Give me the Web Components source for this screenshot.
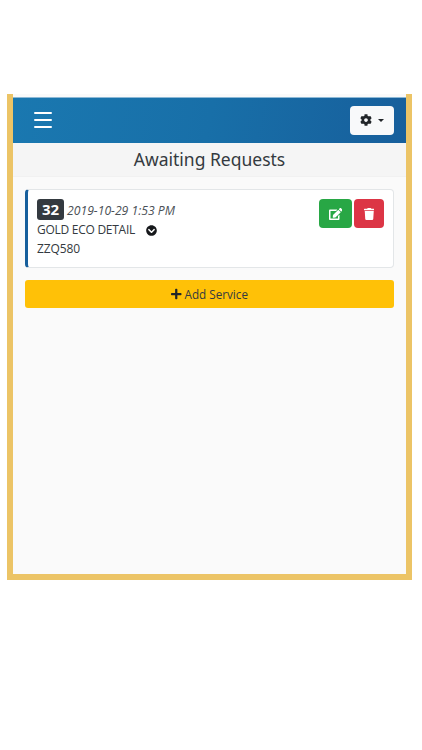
<!DOCTYPE html>
<html>
<head>
<meta charset="utf-8">
<title>Awaiting Requests</title>
<style>
  html, body { margin: 0; background: #fff; }
  body { font-family: "Open Sans", "Liberation Sans", sans-serif; color: #343a40; }
</style>
</head>
<body>
<phone-frame>
  <top-bar></top-bar>
  <page-title>Awaiting Requests</page-title>
  <request-list>
    <request-card number="32" date="2019-10-29 1:53 PM" service="GOLD ECO DETAIL" plate="ZZQ580"></request-card>
    <add-button>Add Service</add-button>
  </request-list>
</phone-frame>

<script>
  const ICONS = {
    cog: ['0 0 512 512', 'M487.4 315.7l-42.6-24.6c4.3-23.2 4.3-47 0-70.2l42.6-24.6c4.9-2.8 7.1-8.6 5.5-14-11.1-35.6-30-67.8-54.7-94.6-3.8-4.1-10-5.1-14.8-2.3L380.8 110c-17.9-15.4-38.5-27.3-60.8-35.1V25.8c0-5.6-3.9-10.5-9.4-11.7-36.7-8.2-74.3-7.8-109.2 0-5.5 1.2-9.4 6.1-9.4 11.7V75c-22.2 7.9-42.8 19.8-60.8 35.1L88.7 85.5c-4.9-2.8-11-1.9-14.8 2.3-24.7 26.7-43.6 58.9-54.7 94.6-1.7 5.4.6 11.2 5.5 14L67.3 221c-4.3 23.2-4.3 47 0 70.2l-42.6 24.6c-4.9 2.8-7.1 8.6-5.5 14 11.1 35.6 30 67.8 54.7 94.6 3.8 4.1 10 5.1 14.8 2.3l42.6-24.6c17.9 15.4 38.5 27.3 60.8 35.1v49.2c0 5.6 3.9 10.5 9.4 11.7 36.7 8.2 74.3 7.8 109.2 0 5.5-1.2 9.4-6.1 9.4-11.7v-49.2c22.2-7.9 42.8-19.8 60.8-35.1l42.6 24.6c4.9 2.8 11 1.9 14.8-2.3 24.7-26.7 43.6-58.9 54.7-94.6 1.5-5.5-.7-11.3-5.6-14.1zM256 336c-44.1 0-80-35.9-80-80s35.9-80 80-80 80 35.9 80 80-35.9 80-80 80z'],
    edit: ['0 0 576 512', 'M402.6 83.2l90.2 90.2c3.8 3.8 3.8 10 0 13.8L274.4 405.6l-92.8 10.3c-12.4 1.4-22.9-9.1-21.5-21.5l10.3-92.8L388.8 83.2c3.8-3.8 10-3.8 13.8 0zm162-22.9l-48.8-48.8c-15.2-15.2-39.9-15.2-55.2 0l-35.4 35.4c-3.8 3.8-3.8 10 0 13.8l90.2 90.2c3.8 3.8 10 3.8 13.8 0l35.4-35.4c15.2-15.3 15.2-40 0-55.2zM384 346.2V448H64V128h229.8c3.2 0 6.2-1.3 8.5-3.5l40-40c7.6-7.6 2.2-20.5-8.5-20.5H48C21.5 64 0 85.5 0 112v352c0 26.5 21.5 48 48 48h352c26.5 0 48-21.5 48-48V306.2c0-10.7-12.9-16-20.5-8.5l-40 40c-2.2 2.3-3.5 5.3-3.5 8.5z'],
    trash: ['0 0 448 512', 'M432 32H312l-9.4-18.7A24 24 0 0 0 281.1 0H166.8a23.72 23.72 0 0 0-21.4 13.3L136 32H16A16 16 0 0 0 0 48v32a16 16 0 0 0 16 16h416a16 16 0 0 0 16-16V48a16 16 0 0 0-16-16zM53.2 467a48 48 0 0 0 47.9 45h245.8a48 48 0 0 0 47.9-45L416 128H32z'],
    plus: ['0 0 448 512', 'M416 208H272V64c0-17.67-14.33-32-32-32h-32c-17.67 0-32 14.33-32 32v144H32c-17.67 0-32 14.33-32 32v32c0 17.67 14.33 32 32 32h144v144c0 17.67 14.33 32 32 32h32c17.67 0 32-14.33 32-32V304h144c17.67 0 32-14.33 32-32v-32c0-17.67-14.33-32-32-32z'],
    chevron: ['0 0 512 512', 'M504 256c0 137-111 248-248 248S8 393 8 256 119 8 256 8s248 111 248 248zM273 369.9l135.5-135.5c9.4-9.4 9.4-24.6 0-33.9l-17-17c-9.4-9.4-24.6-9.4-33.9 0L256 285.1 154.4 183.5c-9.4-9.4-24.6-9.4-33.9 0l-17 17c-9.4 9.4-9.4 24.6 0 33.9L239 369.9c9.4 9.4 24.6 9.4 34 0z']
  };

  function icon(name, height) {
    const [box, d] = ICONS[name];
    return `<svg viewBox="${box}" height="${height}" fill="currentColor" style="display:block"><path d="${d}"/></svg>`;
  }

  // outer gold frame, no top border on the original
  class PhoneFrame extends HTMLElement {
    constructor() {
      super();
      this.attachShadow({ mode: 'open' });
      this.shadowRoot.innerHTML = `
        <style>
          :host {
            box-sizing: border-box;
            width: 405px;
            height: 486px;
            margin: 94px 0 0 7px;
            padding-top: 3px;
            border: 6px solid #ecc466;
            border-top: 0;
            background: #fafafa;
            display: flex;
            flex-direction: column;
          }
        </style>
        <slot></slot>
      `;
    }
  }
  customElements.define('phone-frame', PhoneFrame);

  class TopBar extends HTMLElement {
    constructor() {
      super();
      this.attachShadow({ mode: 'open' });
      this.shadowRoot.innerHTML = `
        <style>
          :host {
            display: flex;
            align-items: center;
            justify-content: space-between;
            height: 46px;
            flex: none;
            padding: 0 12px 0 21px;
            background: linear-gradient(100deg, #1a78b0 0%, #186fa8 50%, #175f9c 100%);
            border-top: 1px solid #8db9d6;
            box-sizing: border-box;
          }
          .burger { display: flex; flex-direction: column; gap: 5px; width: 18px; margin-top: -2px; }
          .burger span { display: block; height: 2px; background: #fff; border-radius: 1px; }
          button {
            display: flex;
            align-items: center;
            gap: 6px;
            box-sizing: border-box;
            width: 44px;
            height: 29px;
            margin-top: -1px;
            padding: 0 0 0 10px;
            border: 0;
            border-radius: 4px;
            background: #f8f9fa;
            color: #212529;
          }
          .caret { width: 0; height: 0; border: 3px solid transparent; border-top-color: #212529; border-bottom: 0; }
        </style>
        <div class="burger"><span></span><span></span><span></span></div>
        <button>${icon('cog', 12)}<span class="caret"></span></button>
      `;
    }
  }
  customElements.define('top-bar', TopBar);

  class PageTitle extends HTMLElement {
    constructor() {
      super();
      this.attachShadow({ mode: 'open' });
      this.shadowRoot.innerHTML = `
        <style>
          :host {
            display: block;
            flex: none;
            height: 34px;
            text-align: center;
            font: 17.5px/32px "Noto Sans", "Open Sans", sans-serif;
            color: #343a40;
            background: #f5f5f5;
            border-bottom: 1px solid #f1f1f1;
            box-sizing: border-box;
          }
        </style>
        <slot></slot>
      `;
    }
  }
  customElements.define('page-title', PageTitle);

  class RequestList extends HTMLElement {
    constructor() {
      super();
      this.attachShadow({ mode: 'open' });
      this.shadowRoot.innerHTML = `
        <style>
          :host {
            display: flex;
            flex-direction: column;
            gap: 12px;
            padding: 12px 12px 0;
          }
        </style>
        <slot></slot>
      `;
    }
  }
  customElements.define('request-list', RequestList);

  class RequestCard extends HTMLElement {
    connectedCallback() {
      if (this.shadowRoot) return;
      this.attachShadow({ mode: 'open' });
      this.shadowRoot.innerHTML = `
        <style>
          :host {
            display: flex;
            justify-content: space-between;
            box-sizing: border-box;
            height: 79px;
            padding: 9px 9px 0 9px;
            background: #fff;
            border: 1px solid #e3e6e8;
            border-left: 3px solid #175f9c;
            border-radius: 4px;
            font-size: 12px;
            color: #343a40;
          }
          .first { display: flex; align-items: center; gap: 3px; height: 21px; }
          .badge {
            display: block;
            box-sizing: border-box;
            width: 27px;
            height: 21px;
            line-height: 21px;
            text-align: center;
            border-radius: 3px;
            background: #343a40;
            color: #fff;
            font-size: 15px;
            font-weight: 700;
          }
          .date { font-style: italic; font-size: 12.2px; color: #4a5056; margin-top: 1px; }
          .line { display: flex; align-items: center; gap: 11px; height: 19px; }
          .line span { letter-spacing: -0.27px; }
          .line svg { color: #16181b; margin-top: 1px; }
          .plate { height: 19px; line-height: 19px; letter-spacing: -0.1px; }
          .actions { display: flex; gap: 2px; align-items: flex-start; }
          button {
            display: flex;
            align-items: center;
            justify-content: center;
            box-sizing: border-box;
            height: 29px;
            padding: 0;
            border: 0;
            border-radius: 4px;
            color: #fff;
          }
          .edit { width: 33px; background: #28a745; }
          .del { width: 30px; background: #dc3545; }
        </style>
        <div>
          <div class="first">
            <span class="badge">${this.getAttribute('number')}</span>
            <span class="date">${this.getAttribute('date')}</span>
          </div>
          <div class="line"><span>${this.getAttribute('service')}</span>${icon('chevron', 11)}</div>
          <div class="plate">${this.getAttribute('plate')}</div>
        </div>
        <div class="actions">
          <button class="edit">${icon('edit', 12)}</button>
          <button class="del">${icon('trash', 12)}</button>
        </div>
      `;
    }
  }
  customElements.define('request-card', RequestCard);

  class AddButton extends HTMLElement {
    constructor() {
      super();
      this.attachShadow({ mode: 'open' });
      this.shadowRoot.innerHTML = `
        <style>
          :host {
            display: flex;
            align-items: center;
            justify-content: center;
            gap: 3px;
            height: 28px;
            border-radius: 3px;
            background: #ffc107;
            color: #343a40;
            font-size: 11.7px;
          }
          svg { color: #212529; }
        </style>
        ${icon('plus', 12)}<slot></slot>
      `;
    }
  }
  customElements.define('add-button', AddButton);
</script>
</body>
</html>
